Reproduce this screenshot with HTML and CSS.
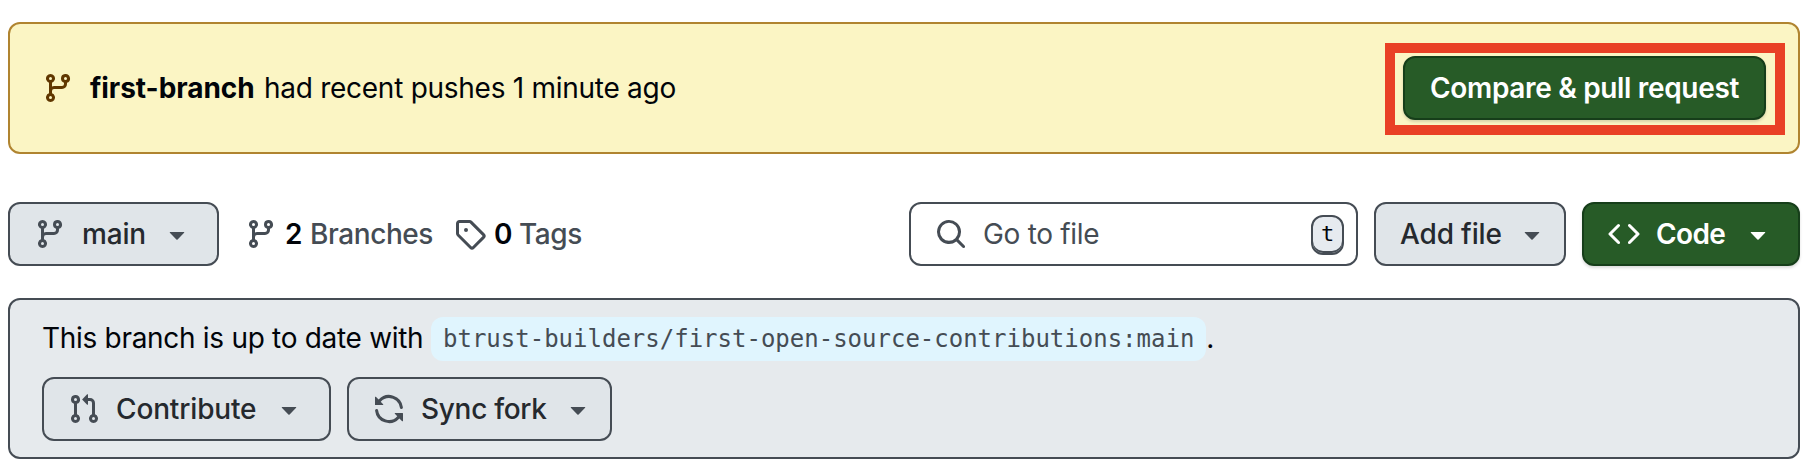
FILE: index.html
```html
<!DOCTYPE html>
<html lang="en">
<head>
<meta charset="utf-8">
<title>Repository</title>
<link rel="stylesheet" href="styles.css">
</head>
<body>
<svg class="sprite" width="0" height="0" aria-hidden="true">
  <symbol id="branch" viewBox="0 0 16 16"><path d="M9.5 3.25a2.25 2.25 0 1 1 3 2.122V6A2.5 2.5 0 0 1 10 8.5H6a1 1 0 0 0-1 1v1.128a2.251 2.251 0 1 1-1.5 0V5.372a2.25 2.25 0 1 1 1.5 0v1.836A2.493 2.493 0 0 1 6 7h4a1 1 0 0 0 1-1v-.628A2.25 2.25 0 0 1 9.5 3.25Zm-6 0a.75.75 0 1 0 1.5 0 .75.75 0 0 0-1.5 0Zm8.25-.75a.75.75 0 1 0 0 1.5.75.75 0 0 0 0-1.5ZM4.25 12a.75.75 0 1 0 0 1.5.75.75 0 0 0 0-1.5Z"/></symbol>
  <symbol id="caret" viewBox="0 0 16 16"><path d="m4.427 7.427 3.396 3.396a.25.25 0 0 0 .354 0l3.396-3.396A.25.25 0 0 0 11.396 7H4.604a.25.25 0 0 0-.177.427Z"/></symbol>
  <symbol id="tag" viewBox="0 0 16 16"><path d="M1 7.775V2.75C1 1.784 1.784 1 2.75 1h5.025c.464 0 .91.184 1.238.513l6.25 6.25a1.75 1.75 0 0 1 0 2.474l-5.026 5.026a1.75 1.75 0 0 1-2.474 0l-6.25-6.25A1.752 1.752 0 0 1 1 7.775Zm1.5 0c0 .066.026.13.073.177l6.25 6.25a.25.25 0 0 0 .354 0l5.025-5.025a.25.25 0 0 0 0-.354l-6.25-6.25a.25.25 0 0 0-.177-.073H2.75a.25.25 0 0 0-.25.25ZM6 5a1 1 0 1 1 0 2 1 1 0 0 1 0-2Z"/></symbol>
  <symbol id="search" viewBox="0 0 16 16"><path d="M10.68 11.74a6 6 0 0 1-7.922-8.982 6 6 0 0 1 8.982 7.922l3.04 3.04a.749.749 0 0 1-.326 1.275.749.749 0 0 1-.734-.215ZM11.5 7a4.499 4.499 0 1 0-8.997 0A4.499 4.499 0 0 0 11.5 7Z"/></symbol>
  <symbol id="code" viewBox="0 0 16 16"><path d="m11.28 3.22 4.25 4.25a.75.75 0 0 1 0 1.06l-4.25 4.25a.749.749 0 0 1-1.275-.326.749.749 0 0 1 .215-.734L13.94 8l-3.72-3.72a.749.749 0 0 1 .326-1.275.749.749 0 0 1 .734.215Zm-6.56 0a.751.751 0 0 1 1.042.018.751.751 0 0 1 .018 1.042L2.06 8l3.72 3.72a.749.749 0 0 1-.326 1.275.749.749 0 0 1-.734-.215L.47 8.53a.75.75 0 0 1 0-1.06Z"/></symbol>
  <symbol id="pull" viewBox="0 0 16 16"><path d="M1.5 3.25a2.25 2.25 0 1 1 3 2.122v5.256a2.251 2.251 0 1 1-1.5 0V5.372A2.25 2.25 0 0 1 1.5 3.25Zm5.677-.177L9.573.677A.25.25 0 0 1 10 .854V2.5h1A2.5 2.5 0 0 1 13.5 5v5.628a2.251 2.251 0 1 1-1.5 0V5a1 1 0 0 0-1-1h-1v1.646a.25.25 0 0 1-.427.177L7.177 3.427a.25.25 0 0 1 0-.354ZM3.75 2.5a.75.75 0 1 0 0 1.5.75.75 0 0 0 0-1.5Zm0 9.5a.75.75 0 1 0 0 1.5.75.75 0 0 0 0-1.5Zm8.25.75a.75.75 0 1 0 1.5 0 .75.75 0 0 0-1.5 0Z"/></symbol>
  <symbol id="sync" viewBox="0 0 16 16"><path d="M1.705 8.005a.75.75 0 0 1 .834.656 5.5 5.5 0 0 0 9.592 2.97l-1.204-1.204a.25.25 0 0 1 .177-.427h3.646a.25.25 0 0 1 .25.25v3.646a.25.25 0 0 1-.427.177l-1.38-1.38A7.002 7.002 0 0 1 1.05 8.84a.75.75 0 0 1 .656-.834ZM8 2.5a5.487 5.487 0 0 0-4.131 1.869l1.204 1.204A.25.25 0 0 1 4.896 6H1.25A.25.25 0 0 1 1 5.75V2.104a.25.25 0 0 1 .427-.177l1.38 1.38A7.002 7.002 0 0 1 14.95 7.16a.75.75 0 0 1-1.49.178A5.5 5.5 0 0 0 8 2.5Z"/></symbol>
</svg>
<main class="page">
  <section class="banner">
    <svg class="icon banner-icon"><use href="#branch"/></svg>
    <p class="banner-text"><strong class="branch-name">first-branch</strong> <span class="push-info">had recent pushes 1 minute ago</span></p>
    <div class="highlight"><button class="btn primary compare"><span>Compare &amp; pull request</span></button></div>
  </section>

  <nav class="toolbar">
    <button class="btn branch-select"><svg class="icon"><use href="#branch"/></svg><span class="label">main</span><svg class="icon"><use href="#caret"/></svg></button>
    <a class="stat branches"><svg class="icon"><use href="#branch"/></svg><b>2</b><span>Branches</span></a>
    <a class="stat tags"><svg class="icon"><use href="#tag"/></svg><b>0</b><span>Tags</span></a>
    <div class="search"><svg class="icon"><use href="#search"/></svg><span class="placeholder">Go to file</span><kbd class="key">t</kbd></div>
    <button class="btn add-file"><span class="label">Add file</span><svg class="icon"><use href="#caret"/></svg></button>
    <button class="btn primary code"><svg class="icon"><use href="#code"/></svg><span class="label">Code</span><svg class="icon"><use href="#caret"/></svg></button>
  </nav>

  <section class="status">
    <p class="status-line"><span class="status-text">This branch is up to date with</span><code class="ref">btrust-builders/first-open-source-contributions:main</code><span class="stop">.</span></p>
    <div class="actions">
      <button class="btn contribute"><svg class="icon"><use href="#pull"/></svg><span class="label">Contribute</span><svg class="icon"><use href="#caret"/></svg></button>
      <button class="btn sync"><svg class="icon"><use href="#sync"/></svg><span class="label">Sync fork</span><svg class="icon"><use href="#caret"/></svg></button>
    </div>
  </section>
</main>
</body>
</html>
```

FILE: styles.css
```css
* { box-sizing: border-box; }

body {
  margin: 0;
  background: #fff;
  color: #010409;
  font: 28px/42px Inter, "Liberation Sans", sans-serif;
  white-space: nowrap;
}

.sprite { display: none; }
.page { width: 1810px; height: 474px; padding: 22px 10px 0 8px; overflow: hidden; }
p { margin: 0; }

.icon { flex: none; width: 32px; height: 32px; fill: currentColor; }

.btn {
  display: flex;
  flex: none;
  align-items: center;
  height: 64px;
  margin: 0;
  padding: 0 24px;
  border: 2px solid #454c54;
  border-radius: 12px;
  background: #e0e5e9;
  color: #454c54;
  font: 500 28px/40px Inter, "Liberation Sans", sans-serif;
  letter-spacing: -0.15px;
  text-align: left;
}
.label { flex: none; color: #25292e; }
.primary {
  border-color: #163e1a;
  background: #275b27;
  color: #fff;
  box-shadow: 0 2px 3px rgba(1, 4, 9, 0.14);
}
.primary .label { color: #fff; }

.banner {
  display: flex;
  align-items: center;
  height: 132px;
  padding: 0 13px 0 32px;
  border: 2px solid #b08430;
  border-radius: 12px;
  background: #fbf5c4;
}
.banner-icon { color: #603700; }
.banner-text { flex: 1; display: flex; padding-left: 16px; }
.branch-name { width: 174px; font-weight: 700; letter-spacing: -0.05px; }
.push-info { letter-spacing: -0.27px; }
.highlight { width: 400px; height: 92px; margin-top: 2px; padding: 3px 8px; border: 10px solid #e94025; }
.compare { width: 363px; justify-content: center; letter-spacing: -0.33px; font-weight: 600; }

.toolbar { display: flex; align-items: center; height: 64px; margin-top: 48px; }
.branch-select { width: 211px; }
.branch-select .label { width: 79px; margin-left: 16px; }
.stat { display: flex; align-items: center; color: #454c54; font-weight: 500; letter-spacing: -0.42px; }
.stat b { width: 25px; margin-left: 8px; color: #010409; font-weight: 600; }
.branches { width: 209px; margin-left: 26px; }
.tags { width: 455px; }
.search {
  display: flex;
  align-items: center;
  width: 449px;
  height: 64px;
  padding: 0 12px 0 24px;
  border: 2px solid #454c54;
  border-radius: 12px;
  color: #454c54;
}
.placeholder { flex: 1; margin-left: 16px; letter-spacing: -0.3px; }
.key {
  width: 33px;
  height: 40px;
  margin-top: 2px;
  border: 2px solid #454c54;
  border-radius: 12px;
  background: #e6eaef;
  box-shadow: inset 0 -2px 0 #454c54;
  color: #010409;
  font: 22px/34px "DejaVu Sans Mono", monospace;
  text-align: center;
}
.add-file { width: 192px; margin-left: 16px; padding-right: 16px; }
.add-file .label { width: 116px; }
.code { width: 218px; margin-left: 16px; }
.code .label { width: 86px; margin-left: 16px; font-weight: 600; letter-spacing: -0.6px; }

.status {
  height: 161px;
  margin-top: 32px;
  padding: 17px 32px 0;
  border: 2px solid #454c54;
  border-radius: 12px;
  background: #e6eaed;
}
.status-line { display: flex; align-items: center; height: 44px; }
.status-text { width: 389px; margin-top: -2px; letter-spacing: -0.3px; }
.stop { margin-top: -2px; }
.ref {
  height: 44px;
  padding: 0 12px;
  border-radius: 12px;
  background: #e0f5fe;
  color: #454c54;
  font: 24px/44px "DejaVu Sans Mono", monospace;
}
.actions { display: flex; gap: 16px; margin-top: 16px; }
.contribute { width: 289px; }
.contribute .label { width: 157px; margin-left: 16px; }
.sync { width: 265px; }
.sync .label { width: 141px; margin-left: 16px; letter-spacing: -0.3px; }
```
